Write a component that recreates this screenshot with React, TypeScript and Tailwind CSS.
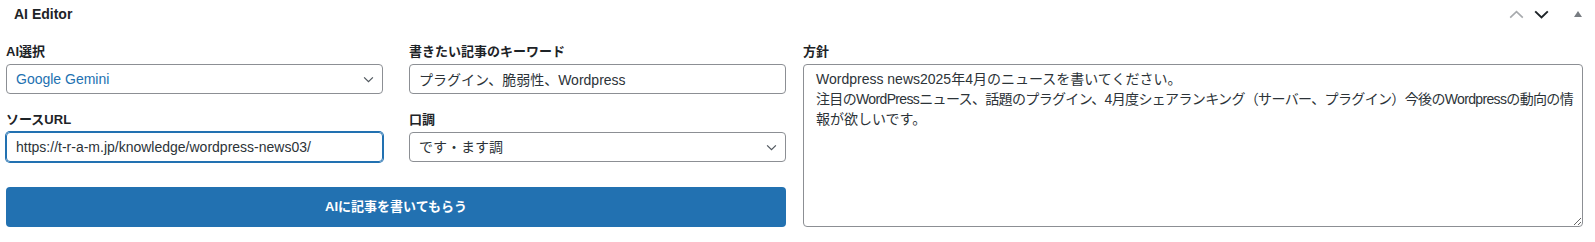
import React from "react";

const FONT = { fontFamily: '"Liberation Sans", "Noto Sans CJK JP", sans-serif' };

function Chevron({ className }: { className?: string }) {
  return (
    <svg viewBox="0 0 12 8" className={className} fill="none" stroke="currentColor" strokeWidth="1.4">
      <polyline points="1,1.5 6,6.5 11,1.5" />
    </svg>
  );
}

function Label({ children }: { children: React.ReactNode }) {
  return <div className="text-[13px] leading-[20px] font-semibold text-[#1d2327] mb-[2px]">{children}</div>;
}

function FakeSelect({ value, blue }: { value: string; blue?: boolean }) {
  return (
    <div className="h-[30px] flex items-center justify-between pl-[9px] pr-[8px] border border-[#8c8f94] rounded-[4px] bg-white">
      <span className={`text-[14px] ${blue ? "text-[#2271b1]" : "text-[#2c3338]"}`}>{value}</span>
      <Chevron className="w-[11px] h-[7px] text-[#50575e]" />
    </div>
  );
}

export default function App() {
  return (
    <div className="w-[1595px] h-[242px] bg-white text-[#1d2327]" style={FONT}>
      <div className="h-[28px] flex items-center justify-between pl-[14px] pr-[13px]">
        <span className="text-[14px] font-semibold">AI Editor</span>
        <div className="flex items-center">
          <svg viewBox="0 0 16 10" className="w-[15px] h-[9px] text-[#a7aaad]" fill="none" stroke="currentColor" strokeWidth="1.8">
            <polyline points="1,8.5 8,1.8 15,8.5" />
          </svg>
          <svg viewBox="0 0 16 10" className="w-[15px] h-[9px] ml-[10px] text-[#1d2327]" fill="none" stroke="currentColor" strokeWidth="2.2">
            <polyline points="1,1.5 8,8.2 15,1.5" />
          </svg>
          <svg viewBox="0 0 8 6" className="w-[8px] h-[6px] ml-[25px] text-[#787c82]" fill="currentColor">
            <polygon points="4,0 8,6 0,6" />
          </svg>
        </div>
      </div>

      <div className="grid grid-cols-2 gap-x-[17px] pl-[6px] pr-[12px] pt-[14px]">
        <div className="flex flex-col">
          <div className="grid grid-cols-2 gap-x-[26px] gap-y-[16px]">
            <div>
              <Label>AI選択</Label>
              <FakeSelect value="Google Gemini" blue />
            </div>
            <div>
              <Label>書きたい記事のキーワード</Label>
              <input
                readOnly
                value="プラグイン、脆弱性、Wordpress"
                className="w-full h-[30px] px-[9px] text-[14px] text-[#2c3338] border border-[#8c8f94] rounded-[4px] outline-none"
                style={FONT}
              />
            </div>
            <div>
              <Label>ソースURL</Label>
              <input
                readOnly
                value="https://t-r-a-m.jp/knowledge/wordpress-news03/"
                className="w-full h-[30px] px-[9px] text-[14px] text-[#2c3338] border border-[#2271b1] rounded-[4px] shadow-[0_0_0_1px_#2271b1] outline-none"
                style={FONT}
              />
            </div>
            <div>
              <Label>口調</Label>
              <FakeSelect value="です・ます調" />
            </div>
          </div>
          <button
            className="mt-[25px] h-[40px] w-full rounded-[4px] bg-[#2271b1] text-white text-[13px] font-semibold"
            style={FONT}
          >
            AIに記事を書いてもらう
          </button>
        </div>

        <div className="flex flex-col">
          <Label>方針</Label>
          {/* textarea look-alike so the wrapped second line can be kept on one row */}
          <div
            role="textbox"
            aria-multiline="true"
            className="h-[163px] w-full px-[12px] py-[4px] text-[14px] leading-[20px] text-[#2c3338] border border-[#8c8f94] rounded-[4px] resize overflow-hidden"
          >
            <div className="whitespace-nowrap">Wordpress news2025年4月のニュースを書いてください。</div>
            <div className="whitespace-nowrap tracking-[-0.65px]">
              注目のWordPressニュース、話題のプラグイン、4月度シェアランキング（サーバー、プラグイン）今後のWordpressの動向の情
            </div>
            <div className="whitespace-nowrap">報が欲しいです。</div>
          </div>
        </div>
      </div>
    </div>
  );
}
